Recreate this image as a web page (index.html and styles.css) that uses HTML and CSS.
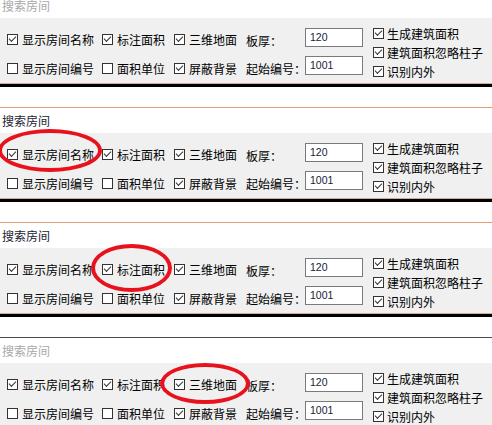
FILE: index.html
```html
<!DOCTYPE html>
<html>
<head>
  <meta charset="utf-8">
  <title>搜索房间</title>
  <link rel="stylesheet" href="styles.css">
</head>
<body>
    <div class="shot cut">
        <div class="search hint">搜索房间</div>
        <div class="panel">
            <div class="opts">
                <label class="chk on"><i></i>显示房间名称</label>
                <label class="chk on"><i></i>标注面积</label>
                <label class="chk on"><i></i>三维地面</label>
                <label class="chk"><i></i>显示房间编号</label>
                <label class="chk"><i></i>面积单位</label>
                <label class="chk on"><i></i>屏蔽背景</label>
            </div>
            <div class="fields">
                <span class="lbl">板厚：</span><span class="edit">120</span>
                <span class="lbl">起始编号：</span><span class="edit">1001</span>
            </div>
            <div class="extra">
                <label class="chk on"><i></i>生成建筑面积</label>
                <label class="chk on"><i></i>建筑面积忽略柱子</label>
                <label class="chk on"><i></i>识别内外</label>
            </div>
        </div>
    </div>

    <div class="shot warm">
        <div class="search">搜索房间</div>
        <div class="panel">
            <div class="opts">
                <label class="chk on"><i></i>显示房间名称</label>
                <label class="chk on"><i></i>标注面积</label>
                <label class="chk on"><i></i>三维地面</label>
                <label class="chk"><i></i>显示房间编号</label>
                <label class="chk"><i></i>面积单位</label>
                <label class="chk on"><i></i>屏蔽背景</label>
            </div>
            <div class="fields">
                <span class="lbl">板厚：</span><span class="edit">120</span>
                <span class="lbl">起始编号：</span><span class="edit">1001</span>
            </div>
            <div class="extra">
                <label class="chk on"><i></i>生成建筑面积</label>
                <label class="chk on"><i></i>建筑面积忽略柱子</label>
                <label class="chk on"><i></i>识别内外</label>
            </div>
        </div>
        <div class="ring ring-name"></div>
    </div>

    <div class="shot warm">
        <div class="search">搜索房间</div>
        <div class="panel">
            <div class="opts">
                <label class="chk on"><i></i>显示房间名称</label>
                <label class="chk on"><i></i>标注面积</label>
                <label class="chk on"><i></i>三维地面</label>
                <label class="chk"><i></i>显示房间编号</label>
                <label class="chk"><i></i>面积单位</label>
                <label class="chk on"><i></i>屏蔽背景</label>
            </div>
            <div class="fields">
                <span class="lbl">板厚：</span><span class="edit">120</span>
                <span class="lbl">起始编号：</span><span class="edit">1001</span>
            </div>
            <div class="extra">
                <label class="chk on"><i></i>生成建筑面积</label>
                <label class="chk on"><i></i>建筑面积忽略柱子</label>
                <label class="chk on"><i></i>识别内外</label>
            </div>
        </div>
        <div class="ring ring-area"></div>
    </div>

    <div class="shot dark">
        <div class="search hint">搜索房间</div>
        <div class="panel">
            <div class="opts">
                <label class="chk on"><i></i>显示房间名称</label>
                <label class="chk on"><i></i>标注面积</label>
                <label class="chk on"><i></i>三维地面</label>
                <label class="chk"><i></i>显示房间编号</label>
                <label class="chk"><i></i>面积单位</label>
                <label class="chk on"><i></i>屏蔽背景</label>
            </div>
            <div class="fields">
                <span class="lbl">板厚：</span><span class="edit">120</span>
                <span class="lbl">起始编号：</span><span class="edit">1001</span>
            </div>
            <div class="extra">
                <label class="chk on"><i></i>生成建筑面积</label>
                <label class="chk on"><i></i>建筑面积忽略柱子</label>
                <label class="chk on"><i></i>识别内外</label>
            </div>
        </div>
        <div class="ring ring-floor"></div>
    </div>
</body>
</html>
```

FILE: styles.css
```css
body, html {
    margin: 0;
    padding: 0;
    height: 100%;
    overflow: hidden;
}
body {
    font-family: "Noto Sans CJK SC", sans-serif;
    font-size: 12px;
    color: #000;
    background: #fff;
}
.shot {
    position: relative;
    margin-bottom: 20px;
    border-bottom: 3px solid #000;
}
.shot.cut {
    margin-top: -7px;
}
.shot.warm {
    border-top: 1px solid #e39b78;
}
.shot.dark {
    border-top: 1px solid #4a4a4a;
}
.search {
    height: 25px;
    line-height: 25px;
    padding-left: 2px;
    background: #fff;
    color: #1c1c34;
}
.search.hint {
    color: #a8a8a8;
}
.panel {
    display: flex;
    height: 65px;
    background: #f0f0f0;
    border-bottom: 1px solid #d8a88e;
}
.opts {
    display: grid;
    grid-template-columns: 95px 72px 72px;
    grid-template-rows: 20px 20px;
    row-gap: 9px;
    padding: 11px 0 0 7px;
}
.chk {
    display: flex;
    align-items: center;
    gap: 4px;
    white-space: nowrap;
}
.chk i {
    position: relative;
    flex: none;
    width: 11px;
    height: 11px;
    box-sizing: border-box;
    border: 1px solid #333;
    background: #fff;
}
.chk.on i::after {
    content: '';
    position: absolute;
    left: 1px;
    top: 1px;
    width: 6px;
    height: 3px;
    border-left: 1px solid #333;
    border-bottom: 1px solid #333;
    transform: rotate(-45deg);
}
.fields {
    display: grid;
    grid-template-columns: 59px 58px;
    grid-template-rows: 19px 19px;
    row-gap: 9px;
    padding-top: 10px;
}
.lbl {
    align-self: end;
    line-height: 12px;
    white-space: nowrap;
}
.edit {
    box-sizing: border-box;
    height: 19px;
    padding-left: 4px;
    border: 1px solid #7a7a7a;
    background: #fff;
    font-family: "Liberation Sans", Arial, sans-serif;
    font-size: 10.5px;
    line-height: 17px;
    color: #1a1a3a;
}
.extra {
    display: flex;
    flex-direction: column;
    margin-left: 10px;
    padding-top: 6px;
}
.extra .chk {
    height: 19px;
    gap: 3px;
}
.ring {
    position: absolute;
    box-sizing: border-box;
    border: 4px solid #e8121c;
    border-radius: 50%;
}
.ring-name {
    left: -2px;
    top: 21px;
    width: 104px;
    height: 43px;
}
.ring-area {
    left: 91px;
    top: 21px;
    width: 81px;
    height: 48px;
}
.ring-floor {
    left: 160px;
    top: 25px;
    width: 90px;
    height: 41px;
}
```
